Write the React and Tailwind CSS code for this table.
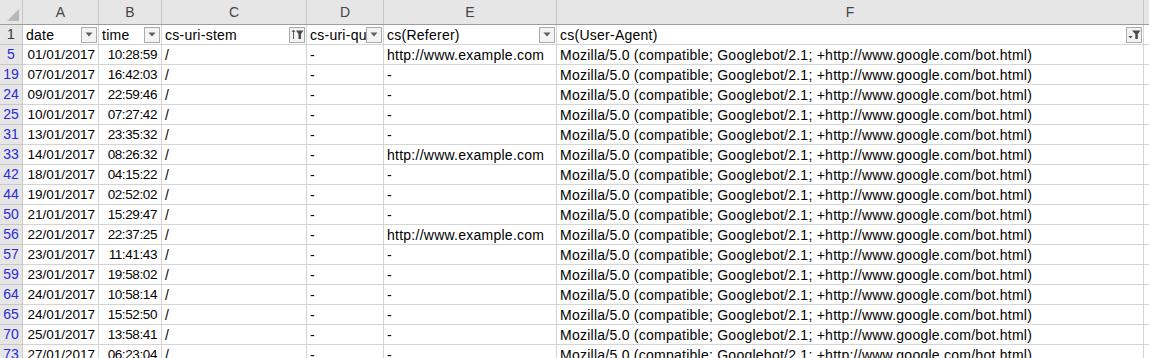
import React from 'react';

const rows = [
  ['5', '01/01/2017', '10:28:59', 'http://www.example.com'],
  ['19', '07/01/2017', '16:42:03', '-'],
  ['24', '09/01/2017', '22:59:46', '-'],
  ['25', '10/01/2017', '07:27:42', '-'],
  ['31', '13/01/2017', '23:35:32', '-'],
  ['33', '14/01/2017', '08:26:32', 'http://www.example.com'],
  ['42', '18/01/2017', '04:15:22', '-'],
  ['44', '19/01/2017', '02:52:02', '-'],
  ['50', '21/01/2017', '15:29:47', '-'],
  ['56', '22/01/2017', '22:37:25', 'http://www.example.com'],
  ['57', '23/01/2017', '11:41:43', '-'],
  ['59', '23/01/2017', '19:58:02', '-'],
  ['64', '24/01/2017', '10:58:14', '-'],
  ['65', '24/01/2017', '15:52:50', '-'],
  ['70', '25/01/2017', '13:58:41', '-'],
  ['73', '27/01/2017', '06:23:04', '-'],
];

const UA = 'Mozilla/5.0 (compatible; Googlebot/2.1; +http://www.google.com/bot.html)';

const cols = 'grid grid-cols-[23px_76px_63px_145px_77px_173px_587px_1fr]';

// filter dropdown button drawn in the header cells
const FilterBtn = ({ kind = 'arrow' }) => (
  <div className="w-[16px] h-[16px] shrink-0 border border-[#ababab] bg-[#f3f3f3] flex items-center justify-center">
    {kind === 'arrow' && (
      <svg width="8" height="5" viewBox="0 0 8 5">
        <path d="M0.5 0.5h7L4 4.5z" fill="#5f5f5f" />
      </svg>
    )}
    {kind === 'sort' && (
      <svg width="13" height="11" viewBox="0 0 13 11">
        <path d="M2.5 1v9M1 3l1.5-2 1.5 2" stroke="#5f5f5f" strokeWidth="1" fill="none" />
        <path d="M5 1.5h7.5L10 5v5H7.5V5z" fill="#4a4a4a" />
      </svg>
    )}
    {kind === 'filter' && (
      <svg width="13" height="11" viewBox="0 0 13 11">
        <path d="M4 1.5h8.5L9.8 5v5H7.3V5z" fill="#4a4a4a" />
        <path d="M0.5 7h4L2.5 9.5z" fill="#4a4a4a" />
      </svg>
    )}
  </div>
);

const HeadCell = ({ label, kind }) => (
  <div className="h-[20px] border-r border-b border-[#d4d4d4] bg-white flex items-center pl-[3px] pr-[1px] overflow-hidden tracking-[0.25px]">
    <span className="flex-1 whitespace-nowrap overflow-hidden pt-[1px]">{label}</span>
    <FilterBtn kind={kind} />
  </div>
);

const Cell = ({ children, className = '' }) => (
  <div
    className={`h-[20px] border-r border-b border-[#d4d4d4] bg-white flex items-center pt-[1px] whitespace-nowrap overflow-hidden ${className}`}
  >
    {children}
  </div>
);

const App = () => {
  return (
    <div
      className="w-[1149px] h-[358px] overflow-hidden bg-white text-[14px] text-black"
      style={{ fontFamily: '"Liberation Sans", Arial, sans-serif' }}
    >
      {/* column letters */}
      <div className={`${cols} h-[25px] bg-[#e6e6e6] border-b border-[#9e9e9e] text-[#444]`}>
        <div className="relative border-r border-[#c8c8c8]">
          <svg className="absolute right-[3px] bottom-[3px]" width="12" height="12" viewBox="0 0 12 12">
            <path d="M12 0V12H0z" fill="#b8b8b8" />
          </svg>
        </div>
        {['A', 'B', 'C', 'D', 'E', 'F'].map((c) => (
          <div key={c} className="border-r border-[#c8c8c8] flex items-center justify-center">
            {c}
          </div>
        ))}
        <div />
      </div>

      {/* row 1 : table headers */}
      <div className={cols}>
        <div className="h-[20px] bg-[#e6e6e6] border-r border-b border-[#c8c8c8] flex items-center justify-center text-[#333]">
          1
        </div>
        <HeadCell label="date" kind="arrow" />
        <HeadCell label="time" kind="arrow" />
        <HeadCell label="cs-uri-stem" kind="sort" />
        <HeadCell label="cs-uri-query" kind="arrow" />
        <HeadCell label="cs(Referer)" kind="arrow" />
        <HeadCell label="cs(User-Agent)" kind="filter" />
        <div className="h-[20px] border-b border-[#d4d4d4]" />
      </div>

      {/* filtered data rows */}
      {rows.map(([n, date, time, ref]) => (
        <div key={n} className={cols}>
          <div className="h-[20px] bg-[#e6e6e6] border-r border-b border-[#c8c8c8] flex items-center justify-center text-[#2a2ad6]">
            {n}
          </div>
          <Cell className="justify-end pr-[3px] text-[13.5px]">{date}</Cell>
          <Cell className="justify-end pr-[4px] text-[13.5px] tracking-[-0.4px]">{time}</Cell>
          <Cell className="px-[3px]">/</Cell>
          <Cell className="px-[3px]">-</Cell>
          <Cell className="px-[3px] tracking-[0.25px]">{ref}</Cell>
          <Cell className="px-[3px] tracking-[0.25px]">{UA}</Cell>
          <div className="h-[20px] border-b border-[#d4d4d4]" />
        </div>
      ))}
    </div>
  );
};

export default App;
